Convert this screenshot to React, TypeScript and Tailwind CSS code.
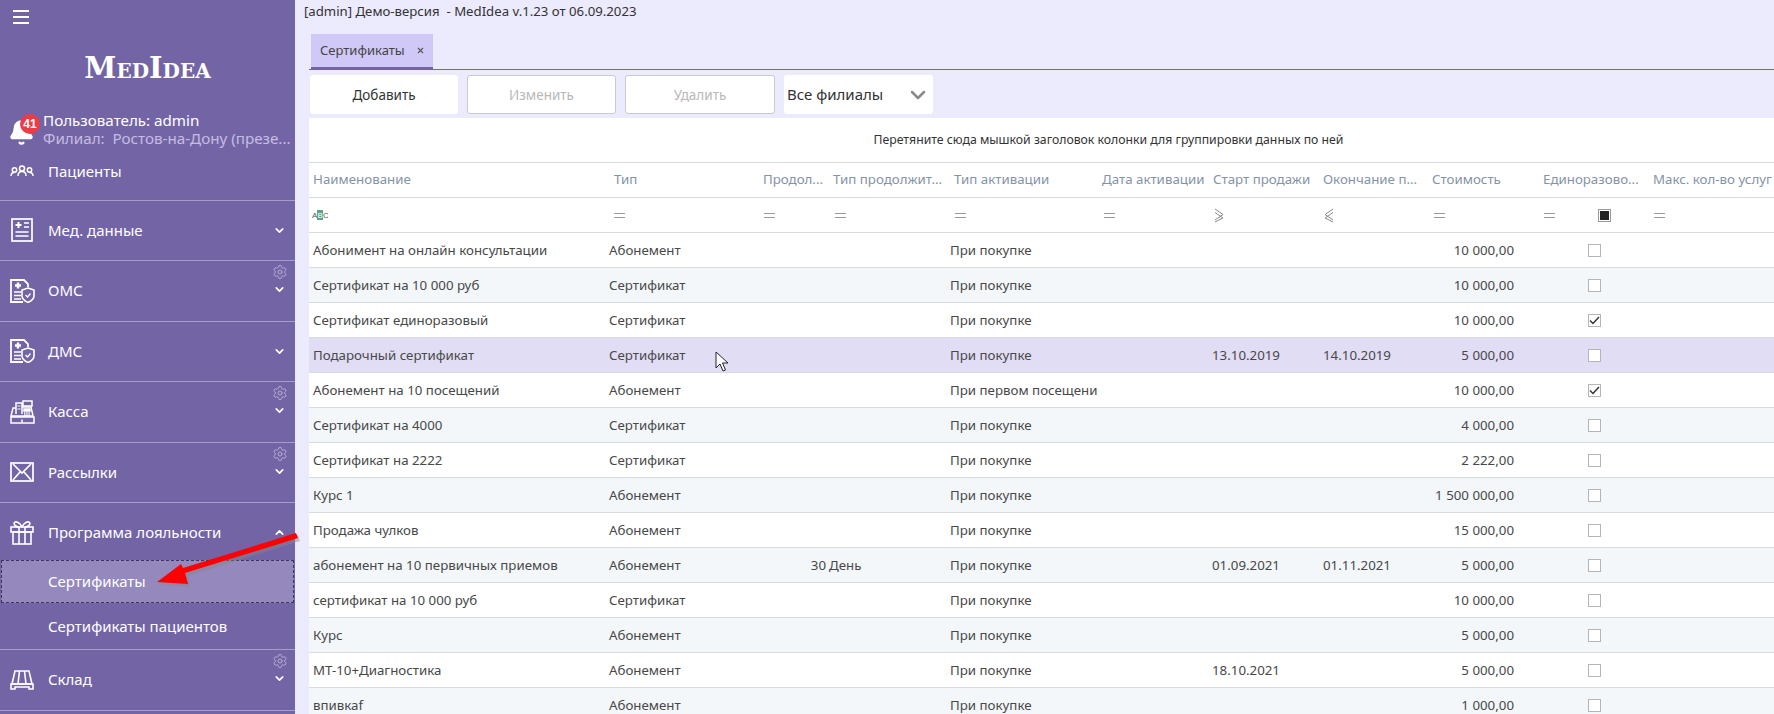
import { Bell, ChevronDown, ChevronUp, Settings, X } from "lucide-react";

type Row = {
  name: string;
  kind: string;
  activation: string;
  cost: string;
  once?: boolean;
  duration?: string;
  unit?: string;
  start?: string;
  end?: string;
};

const rows: Row[] = [
  { name: "Абонимент на онлайн консультации", kind: "Абонемент", activation: "При покупке", cost: "10 000,00" },
  { name: "Сертификат на 10 000 руб", kind: "Сертификат", activation: "При покупке", cost: "10 000,00" },
  { name: "Сертификат единоразовый", kind: "Сертификат", activation: "При покупке", cost: "10 000,00", once: true },
  { name: "Подарочный сертификат", kind: "Сертификат", activation: "При покупке", cost: "5 000,00", start: "13.10.2019", end: "14.10.2019" },
  { name: "Абонемент на 10 посещений", kind: "Абонемент", activation: "При первом посещении", cost: "10 000,00", once: true },
  { name: "Сертификат на 4000", kind: "Сертификат", activation: "При покупке", cost: "4 000,00" },
  { name: "Сертификат на 2222", kind: "Сертификат", activation: "При покупке", cost: "2 222,00" },
  { name: "Курс 1", kind: "Абонемент", activation: "При покупке", cost: "1 500 000,00" },
  { name: "Продажа чулков", kind: "Абонемент", activation: "При покупке", cost: "15 000,00" },
  { name: "абонемент на 10 первичных приемов", kind: "Абонемент", activation: "При покупке", cost: "5 000,00", duration: "30", unit: "День", start: "01.09.2021", end: "01.11.2021" },
  { name: "сертификат на 10 000 руб", kind: "Сертификат", activation: "При покупке", cost: "10 000,00" },
  { name: "Курс", kind: "Абонемент", activation: "При покупке", cost: "5 000,00" },
  { name: "МТ-10+Диагностика", kind: "Абонемент", activation: "При покупке", cost: "5 000,00", start: "18.10.2021" },
  { name: "впивкаf", kind: "Абонемент", activation: "При покупке", cost: "1 000,00" },
];

const gridCols = "grid grid-cols-[296px_154px_70px_116px_153px_110px_110px_110px_108px_113px_125px]";

function DocIcon() {
  return (
    <svg width="22" height="24" viewBox="0 0 22 24" fill="none" stroke="white" strokeWidth="1.7">
      <rect x="1" y="1" width="20" height="22" />
      <path d="M4.500 7h6M7.500 4v6" strokeWidth="2" />
      <path d="M13 5h5M13 9h5M4.500 14h13M4.500 18h13" />
    </svg>
  );
}

function ShieldDocIcon() {
  return (
    <svg width="25" height="24" viewBox="0 0 25 24" fill="none" stroke="white" strokeWidth="1.5">
      <path d="M13 23H1V1h13l4 4v3" strokeWidth="1.800" />
      <path d="M5 6.500h6M8 3.500v6" strokeWidth="2.400" />
      <path d="M4 13h7M4 16.500h7M4 20h7" />
      <path d="M18 9l6 2v6c0 3-3 5-6 6.500-3-1.500-6-3.500-6-6.500v-6z" fill="#7365a5" strokeWidth="1.600" />
      <path d="M15.500 16l2 2 3-3.500" strokeWidth="1.300" />
    </svg>
  );
}

function CashIcon() {
  return (
    <svg width="25" height="24" viewBox="0 0 25 24" fill="none" stroke="white" strokeWidth="1.500">
      <path d="M6 14V3h6v11" />
      <path d="M7.500 6h3M7.500 9h3" strokeWidth="1" />
      <rect x="13" y="1" width="9" height="5" />
      <path d="M12 7h9l2 9H1l2-8h3" />
      <path d="M14 9h6v2h-6z" fill="white" />
      <path d="M14 13h6M14 15h6" strokeDasharray="1.500 0.700" strokeWidth="1.600" />
      <rect x="1" y="17" width="23" height="6" />
      <path d="M12 19.500v3" />
    </svg>
  );
}

function MailIcon() {
  return (
    <svg width="24" height="22" viewBox="0 0 24 22" fill="none" stroke="white" strokeWidth="1.700">
      <rect x="1" y="2" width="22" height="18" />
      <path d="M3 3l9 9 9-9M3 19l7-8M21 19l-7-8" />
    </svg>
  );
}

function GiftIcon() {
  return (
    <svg width="24" height="24" viewBox="0 0 24 24" fill="none" stroke="white" strokeWidth="1.600">
      <rect x="1" y="6" width="22" height="5" />
      <rect x="3" y="11" width="18" height="12" />
      <path d="M9 6v17M15 6v17M12 6C10 1.500 6 0 4.500 1.500S6 6 9 6M12 6c2-4.500 6-6 7.500-4.500S18 6 15 6" />
    </svg>
  );
}

function StoreIcon() {
  return (
    <svg width="24" height="22" viewBox="0 0 24 22" fill="none" stroke="white" strokeWidth="1.600">
      <path d="M5 2h14l3 13H2zM9.500 2L8 15M14.500 2l1.500 13" />
      <path d="M1 15h22v5h-4v-2H5v2H1z" />
    </svg>
  );
}

function PeopleIcon() {
  return (
    <svg width="24" height="12" viewBox="0 0 24 12" fill="none" stroke="white" strokeWidth="1.500">
      <circle cx="12" cy="3.500" r="2.500" />
      <path d="M8 11c0-3 2-4.500 4-4.500s4 1.500 4 4.500" />
      <circle cx="4.500" cy="5" r="2.200" />
      <path d="M1 11c0-2.500 1.500-3.500 3.500-3.500" />
      <circle cx="19.500" cy="5" r="2.200" />
      <path d="M23 11c0-2.500-1.500-3.500-3.500-3.500" />
    </svg>
  );
}

function NavRow({ icon, label, gear }: { icon?: React.ReactNode; label: string; gear?: boolean }) {
  return (
    <div className="relative flex h-[60.500px] shrink-0 items-center border-b border-[#a69cc8]">
      <div className="flex w-[48px] shrink-0 justify-center pr-[4px]">{icon}</div>
      <span className="pb-[1px] text-[15px] text-white">{label}</span>
      {gear ? <Settings className="absolute top-[3px] right-[7px] h-[16px] w-[16px] text-[#b5abd4]" strokeWidth={1.5} /> : null}
      <ChevronDown className={`absolute right-[9px] h-[13px] w-[13px] text-white ${gear ? "top-[22px]" : "top-[23px]"}`} strokeWidth={3} />
    </div>
  );
}

function Sidebar() {
  return (
    <aside className="flex h-full w-[295px] shrink-0 flex-col overflow-hidden bg-[#7365a5] shadow-[2px_0_3px_rgba(0,0,0,0.35)]">
      <div className="px-[13px] pt-[10px]">
        <div className="flex h-[14px] w-[16px] flex-col justify-between">
          <div className="h-[2px] bg-white" />
          <div className="h-[2px] bg-white" />
          <div className="h-[2px] bg-white" />
        </div>
      </div>
      <div className="mt-[27px] text-center font-['DejaVu_Serif',serif] text-[29px] leading-[34px] font-bold text-white [font-variant:small-caps]">
        MedIdea
      </div>
      <div className="relative mt-[26px] h-[37px] shrink-0 pl-[43px]">
        <Bell className="absolute top-[8px] left-[8px] h-[27px] w-[27px] fill-white text-white" />
        <div className="absolute top-[3px] left-[20px] flex h-[20px] w-[20px] items-center justify-center rounded-full bg-[#ee3b46] font-['Liberation_Sans',sans-serif] text-[12px] font-bold text-white">
          41
        </div>
        <div className="text-[15.200px] leading-[18px] text-white">Пользователь: admin</div>
        <div className="text-[15.200px] leading-[18px] whitespace-pre text-[#c6bce2]">Филиал:  Ростов-на-Дону (презе...</div>
      </div>
      <div className="flex h-[52.500px] shrink-0 items-start border-b border-[#a69cc8]">
        <div className="flex w-[48px] shrink-0 justify-center pt-[17px] pr-[4px]">
          <PeopleIcon />
        </div>
        <span className="pt-[12px] text-[15px] leading-[22px] text-white">Пациенты</span>
      </div>
      <NavRow icon={<DocIcon />} label="Мед. данные" />
      <NavRow icon={<ShieldDocIcon />} label="ОМС" gear />
      <NavRow icon={<ShieldDocIcon />} label="ДМС" />
      <NavRow icon={<CashIcon />} label="Касса" gear />
      <NavRow icon={<MailIcon />} label="Рассылки" gear />
      <div className="relative flex h-[57px] shrink-0 items-center pt-[2px]">
        <div className="flex w-[48px] shrink-0 justify-center pt-[1px] pr-[4px]">
          <GiftIcon />
        </div>
        <span className="text-[15px] text-white">Программа лояльности</span>
        <ChevronUp className="absolute top-[23px] right-[9px] h-[13px] w-[13px] text-white" strokeWidth={3} />
      </div>
      <div className="mx-[1px] flex h-[43px] shrink-0 items-center border border-dashed border-[#3d3560] bg-[#9488bc] pl-[46px] text-[15px] text-white">
        Сертификаты
      </div>
      <div className="flex h-[47px] shrink-0 items-center border-b border-[#a69cc8] pl-[48px] text-[15px] text-white">Сертификаты пациентов</div>
      <NavRow icon={<StoreIcon />} label="Склад" gear />
    </aside>
  );
}

function EqualsMark() {
  return (
    <svg width="11" height="5" viewBox="0 0 11 5" stroke="#9a9a9a" strokeWidth="1">
      <path d="M0 .5h11M0 4.500h11" />
    </svg>
  );
}

function CompareMark({ flip }: { flip?: boolean }) {
  return (
    <svg width="11" height="15" viewBox="0 0 11 15" fill="none" stroke="#8a8a8a" strokeWidth="1" className={flip ? "-scale-x-100" : ""}>
      <path d="M1 1l8 5.500-8 5.500M1 4.500l8 5.500-8 4" />
    </svg>
  );
}

function Checkbox({ checked }: { checked?: boolean }) {
  return (
    <div className="flex h-[13px] w-[13px] items-center justify-center border border-[#b5b5b5] bg-white">
      {checked ? (
        <svg width="11" height="9" viewBox="0 0 11 9" fill="none" stroke="#333" strokeWidth="1.500">
          <path d="M1 4.500l3 3L10 1" />
        </svg>
      ) : null}
    </div>
  );
}

function HeaderCell({ label, pad }: { label: string; pad: string }) {
  return <div className={`truncate text-[13.300px] text-[#8593a6] ${pad}`}>{label}</div>;
}

function DataGrid() {
  return (
    <div className="text-[13.300px] text-[#484848]">
      <div className="flex h-[45px] items-center justify-center border-b border-[#d9dcdf] pl-[134px] text-[12.250px] text-[#333]">
        Перетяните сюда мышкой заголовок колонки для группировки данных по ней
      </div>
      <div className={`${gridCols} h-[35px] items-center border-b border-[#d9dcdf] whitespace-nowrap`}>
        <HeaderCell label="Наименование" pad="pl-[4px]" />
        <HeaderCell label="Тип" pad="pl-[9px]" />
        <HeaderCell label="Продол..." pad="pl-[4px]" />
        <HeaderCell label="Тип продолжит..." pad="pl-[4px]" />
        <HeaderCell label="Тип активации" pad="pl-[9px]" />
        <HeaderCell label="Дата активации" pad="pl-[4px]" />
        <HeaderCell label="Старт продажи" pad="pl-[5px]" />
        <HeaderCell label="Окончание п..." pad="pl-[5px]" />
        <HeaderCell label="Стоимость" pad="pl-[4px]" />
        <HeaderCell label="Единоразово..." pad="pl-[7px]" />
        <HeaderCell label="Макс. кол-во услуг" pad="pl-[4px]" />
      </div>
      <div className={`${gridCols} h-[35px] items-center border-b border-[#d9dcdf]`}>
        <div className="pl-[3px]">
          <svg width="16" height="10" viewBox="0 0 16 10" className="block">
            <rect x="5" y="0" width="6" height="10" fill="#5aa58a" />
            <text x="0" y="8" fontSize="8" fill="#555" fontFamily="Liberation Sans">A</text>
            <text x="5.500" y="8" fontSize="8" fill="#fff" fontFamily="Liberation Sans">B</text>
            <text x="11" y="8" fontSize="8" fill="#555" fontFamily="Liberation Sans">C</text>
          </svg>
        </div>
        <div className="pl-[9px]"><EqualsMark /></div>
        <div className="pl-[5px]"><EqualsMark /></div>
        <div className="pl-[6px]"><EqualsMark /></div>
        <div className="pl-[10px]"><EqualsMark /></div>
        <div className="pl-[6px]"><EqualsMark /></div>
        <div className="pl-[6px]"><CompareMark /></div>
        <div className="pl-[5px]"><CompareMark flip /></div>
        <div className="pl-[6px]"><EqualsMark /></div>
        <div className="flex items-center gap-[43px] pl-[8px]">
          <EqualsMark />
          <div className="flex h-[13px] w-[13px] items-center justify-center border border-[#999]">
            <div className="h-[9px] w-[9px] bg-[#222]" />
          </div>
        </div>
        <div className="pl-[5px]"><EqualsMark /></div>
      </div>
      {rows.map((row, i) => (
        <div
          key={row.name}
          className={`${gridCols} h-[35px] items-center border-b border-[#d9dcdf] whitespace-nowrap ${
            i === 3 ? "bg-[#e1ddf5]" : i % 2 === 1 ? "bg-[#f3f7fa]" : "bg-white"
          }`}
        >
          <div className="pt-[2px] pl-[4px]">{row.name}</div>
          <div className="pt-[2px] pl-[4px]">{row.kind}</div>
          <div className="pt-[2px] pr-[3px] text-right">{row.duration}</div>
          <div className="pt-[2px]">{row.unit}</div>
          <div className="overflow-hidden pt-[2px] pl-[5px]">{row.activation}</div>
          <div />
          <div className="pt-[2px] pl-[4px]">{row.start}</div>
          <div className="pt-[2px] pl-[5px]">{row.end}</div>
          <div className="pt-[2px] pr-[22px] text-right">{row.cost}</div>
          <div className="pl-[52px]">
            <Checkbox checked={row.once} />
          </div>
          <div />
        </div>
      ))}
    </div>
  );
}

function Workspace() {
  return (
    <main className="flex h-full min-w-0 flex-1 flex-col overflow-hidden bg-[#eceafd] pl-[14px]">
      <div className="flex h-[24px] shrink-0 items-center text-[13.200px] text-[#333]">
        <span className="-ml-[5px] whitespace-pre">[admin] Демо-версия  - MedIdea v.1.23 от 06.09.2023</span>
      </div>
      <div className="mt-[10px] flex h-[36px] shrink-0 items-stretch border-b border-[#7365a5] pl-[2px]">
        <div className="flex w-[122px] items-center gap-[11px] border-b-2 border-[#7365a5] bg-[#d0c9f7] pl-[9px] text-[13px] text-[#444]">
          Сертификаты
          <X className="h-[9px] w-[9px] text-[#555]" strokeWidth={3} />
        </div>
      </div>
      <div className="flex h-[48px] shrink-0 items-start gap-[9px] pt-[5px] pl-[1px] text-[13.500px]">
        <button className="flex h-[39px] w-[148px] items-center justify-center rounded-[3px] bg-white pt-[1px] text-[#333]">Добавить</button>
        <button className="flex h-[39px] w-[149px] items-center justify-center rounded-[3px] border border-[#c9c9d2] bg-white pt-[1px] text-[#b8b8b8]">Изменить</button>
        <button className="flex h-[39px] w-[150px] items-center justify-center rounded-[3px] border border-[#c9c9d2] bg-white pt-[1px] text-[#b8b8b8]">Удалить</button>
        <div className="flex h-[39px] w-[149px] items-center justify-between rounded-[3px] bg-white pr-[3px] pl-[3px] text-[15px] text-[#333]">
          Все филиалы
          <ChevronDown className="h-[24px] w-[24px] text-[#8a8a8a]" strokeWidth={2.5} />
        </div>
      </div>
      <div className="flex-1 bg-white">
        <DataGrid />
      </div>
    </main>
  );
}

export default function App() {
  return (
    <div className="relative flex h-[714px] w-[1774px] overflow-hidden font-['Noto_Sans',sans-serif]">
      <Sidebar />
      <Workspace />
      {/* red annotation arrow */}
      <svg className="pointer-events-none absolute top-0 left-0" width="320" height="714" viewBox="0 0 320 714">
        <path d="M298 539L186 574L188 585L157 582L181 564L183 569L296 534Z" fill="#888" opacity="0.45" transform="translate(2 2)" />
        <path d="M298 538L185 573L188 584L157 582L181 564L183 568L296 533Z" fill="#f00" />
      </svg>
      {/* mouse pointer over the hovered row */}
      <svg className="pointer-events-none absolute top-[351px] left-[715px]" width="14" height="21" viewBox="0 0 14 21">
        <path d="M1 1v16l4-4 3 7 2.500-1-3-7h5.500z" fill="#fff" stroke="#222" strokeWidth="1" />
      </svg>
    </div>
  );
}
